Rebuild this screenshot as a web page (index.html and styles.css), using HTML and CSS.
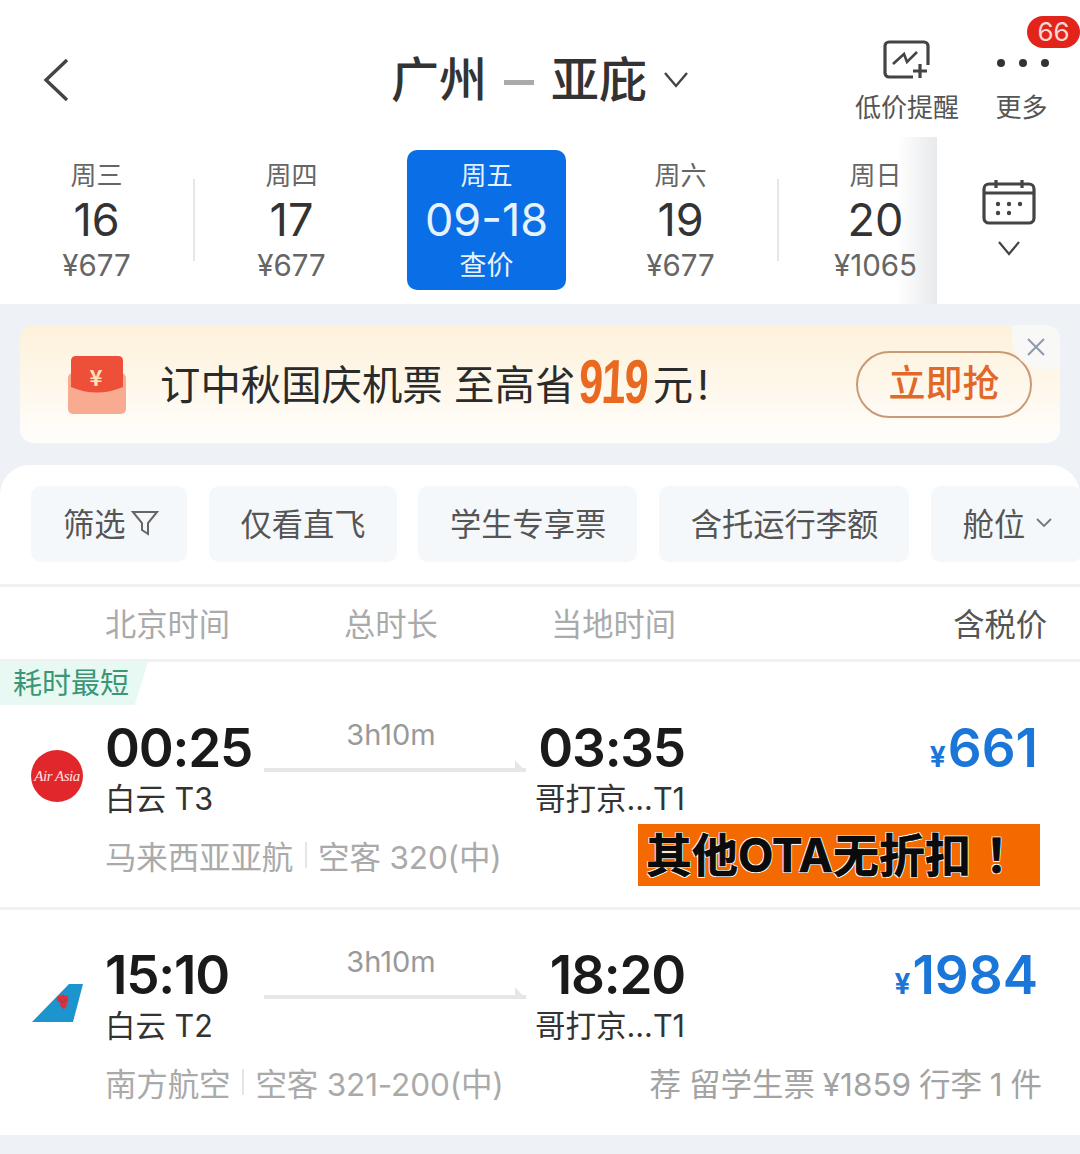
FILE: index.html
```html
<!DOCTYPE html>
<html lang="zh-CN">
<head>
    <meta charset="UTF-8">
    <meta name="viewport" content="width=device-width, initial-scale=1.0">
    <title>广州 - 亚庇</title>
    <link rel="stylesheet" href="styles.css">
</head>
<body>
    <header class="top-bar">
        <div class="back">
            <svg width="28" height="44" viewBox="0 0 28 44" fill="none" stroke="#444" stroke-width="3.4"><path d="M25 2 4 22l21 20"/></svg>
        </div>
        <div class="route-title">
            <span>广州</span>
            <i class="route-dash"></i>
            <span>亚庇</span>
            <svg class="title-caret" width="26" height="18" viewBox="0 0 26 18" fill="none" stroke="#444" stroke-width="2.4"><path d="M2 2l11 13L24 2"/></svg>
        </div>
        <div class="top-actions">
            <div class="action">
                <svg width="48" height="42" viewBox="0 0 48 42" fill="none" stroke="#444" stroke-width="3.2"><path d="M30 37H6a4 4 0 0 1-4-4V6a4 4 0 0 1 4-4h35a4 4 0 0 1 4 4v19"/><path d="M10 24l11-10 3 8 10-10" stroke-width="2.6"/><path d="M37 24v14M30 31h14" stroke-width="3.2"/></svg>
                <span>低价提醒</span>
            </div>
            <div class="action more">
                <b class="badge">66</b>
                <div class="dots"><i></i><i></i><i></i></div>
                <span>更多</span>
            </div>
        </div>
    </header>

    <section class="date-strip">
        <div class="dates">
            <div class="date"><span class="week">周三</span><span class="day">16</span><span class="fare">¥677</span></div>
            <i class="date-sep"></i>
            <div class="date"><span class="week">周四</span><span class="day">17</span><span class="fare">¥677</span></div>
            <div class="date active"><span class="week">周五</span><span class="day">09-18</span><span class="fare">查价</span></div>
            <div class="date"><span class="week">周六</span><span class="day">19</span><span class="fare">¥677</span></div>
            <i class="date-sep"></i>
            <div class="date"><span class="week">周日</span><span class="day">20</span><span class="fare">¥1065</span></div>
        </div>
        <div class="calendar">
            <svg width="54" height="46" viewBox="0 0 54 46" fill="none" stroke="#444" stroke-width="3.2"><rect x="2" y="5" width="50" height="39" rx="5"/><path d="M2 14h50M14 1v8M40 1v8"/><g fill="#444" stroke="none"><circle cx="16" cy="25" r="2.2"/><circle cx="27" cy="25" r="2.2"/><circle cx="38" cy="25" r="2.2"/><circle cx="16" cy="34" r="2.2"/><circle cx="27" cy="34" r="2.2"/></g></svg>
            <svg width="24" height="16" viewBox="0 0 24 16" fill="none" stroke="#444" stroke-width="2.2"><path d="M2 2l10 12L22 2"/></svg>
        </div>
    </section>

    <section class="promo">
        <svg class="envelope" width="60" height="62" viewBox="0 0 60 62">
            <rect x="1" y="20" width="58" height="41" rx="5" fill="#f9ab91"/>
            <path d="M4 8q0-5 5-5h42q5 0 5 5v26q-26 11-52 0z" fill="#ee4f38"/>
            <text x="29" y="33" text-anchor="middle" font-size="22" font-weight="700" fill="#fde2b8" font-family="Noto Sans CJK SC">¥</text>
        </svg>
        <p class="promo-text">订中秋国庆机票 至高省<b>919</b>元<span class="promo-bang">!</span></p>
        <div class="promo-btn">立即抢</div>
        <div class="promo-close">
            <svg width="20" height="20" viewBox="0 0 20 20" fill="none" stroke="#8d99ae" stroke-width="2"><path d="M2 2l16 16M18 2 2 18"/></svg>
        </div>
    </section>

    <main class="results">
        <div class="filters">
            <div class="chip chip-first">筛选
                <svg width="28" height="26" viewBox="0 0 28 26" fill="none" stroke="#666" stroke-width="2"><path d="M2 2h24l-9 11v11l-6-4v-7z"/></svg>
            </div>
            <div class="chip">仅看直飞</div>
            <div class="chip">学生专享票</div>
            <div class="chip">含托运行李额</div>
            <div class="chip chip-last">舱位
                <svg width="16" height="10" viewBox="0 0 16 10" fill="none" stroke="#777" stroke-width="1.8"><path d="M1 1l7 7 7-7"/></svg>
            </div>
        </div>

        <div class="list-head">
            <span>北京时间</span>
            <span>总时长</span>
            <span>当地时间</span>
            <span class="tax">含税价</span>
        </div>

        <article class="flight first">
            <div class="flag">耗时最短</div>
            <div class="flight-main">
                <div class="logo air-asia"><span>Air Asia</span></div>
                <div class="stop">
                    <div class="clock">00:25</div>
                    <div class="port">白云 T3</div>
                </div>
                <div class="leg">
                    <span>3h10m</span>
                    <i class="leg-arrow"></i>
                </div>
                <div class="stop arrive">
                    <div class="clock">03:35</div>
                    <div class="port">哥打京...T1</div>
                </div>
                <div class="price"><small>¥</small>661</div>
            </div>
            <div class="flight-sub">
                <div class="plane">马来西亚亚航<i></i>空客 320(中)</div>
                <div class="ota-note">其他OTA无折扣<span class="ota-bang">！</span></div>
            </div>
        </article>

        <article class="flight">
            <div class="flight-main">
                <div class="logo">
                    <svg width="52" height="40" viewBox="0 0 52 40"><path d="M38 1h14l-10 38H1z" fill="#1c94cd"/><path d="M26 15c1-3 3-3 4-2 1-2 3-2 4 0 2-1 4 0 3 2 1 2 0 4-1 5 0 3-1 5-3 6-3-1-4-3-4-6-2-1-4-3-3-5z" fill="#d7333f"/><path d="M29 16l2 3 2 0 2-3" fill="none" stroke="#8d3a66" stroke-width="1"/></svg>
                </div>
                <div class="stop">
                    <div class="clock">15:10</div>
                    <div class="port">白云 T2</div>
                </div>
                <div class="leg">
                    <span>3h10m</span>
                    <i class="leg-arrow"></i>
                </div>
                <div class="stop arrive">
                    <div class="clock">18:20</div>
                    <div class="port">哥打京...T1</div>
                </div>
                <div class="price"><small>¥</small>1984</div>
            </div>
            <div class="flight-sub">
                <div class="plane">南方航空<i></i>空客 321-200(中)</div>
                <div class="perk">荐 留学生票 ¥1859 行李 1 件</div>
            </div>
        </article>
    </main>
</body>
</html>
```

FILE: styles.css
```css
* {
    box-sizing: border-box;
}

body {
    margin: 0;
    width: 1080px;
    height: 1154px;
    overflow: hidden;
    background-color: #eef1f6;
    font-family: Inter, "Noto Sans CJK SC", sans-serif;
    color: #444;
}

i {
    font-style: normal;
}

/* top bar */
.top-bar {
    display: grid;
    grid-template-columns: 1fr auto 1fr;
    height: 137px;
    background-color: #fff;
}

.back {
    padding: 58px 0 0 42px;
}

.route-title {
    display: flex;
    align-items: center;
    height: 60px;
    margin-top: 50px;
    font-size: 48px;
    font-weight: 500;
    line-height: 60px;
    color: #333;
}

.route-dash {
    width: 30px;
    height: 5px;
    margin: 4px 17px 0;
    background-color: #aaa;
}

.title-caret {
    margin-left: 16px;
}

.top-actions {
    display: flex;
    justify-content: flex-end;
    gap: 35px;
    padding: 40px 31px 0 0;
}

.action {
    position: relative;
    display: flex;
    flex-direction: column;
    align-items: center;
    font-size: 26px;
    line-height: 30px;
    color: #555;
}

.action svg {
    height: 42px;
    margin-bottom: 11px;
}

.dots {
    display: flex;
    gap: 14px;
    height: 42px;
    margin: 0 0 11px 3px;
    padding-top: 19px;
}

.dots i {
    width: 8px;
    height: 8px;
    border-radius: 50%;
    background-color: #333;
}

.badge {
    position: absolute;
    top: -24px;
    right: -31px;
    width: 53px;
    height: 32px;
    border-radius: 16px;
    background-color: #e3241b;
    color: #f9d9d2;
    font-size: 26px;
    font-weight: 400;
    line-height: 32px;
    text-align: center;
}

/* date strip */
.date-strip {
    display: flex;
    height: 167px;
    background-color: #fff;
}

.dates {
    flex: 0 0 937px;
    display: flex;
    align-items: center;
    padding-bottom: 2px;
    overflow: hidden;
    background: linear-gradient(to right, rgba(228, 230, 232, 0), #e7e9eb) right / 40px 100% no-repeat;
}

.date {
    flex: 0 0 193px;
    display: flex;
    flex-direction: column;
    align-items: center;
    justify-content: center;
    height: 140px;
    padding-top: 3px;
}

.date-sep {
    flex: 0 0 2px;
    height: 82px;
    background-color: #e6e6e6;
}

.week {
    font-size: 26px;
    line-height: 30px;
    color: #666;
}

.day {
    font-size: 45px;
    line-height: 58px;
    color: #333;
}

.fare {
    font-size: 29.5px;
    line-height: 33px;
    color: #666;
}

.date.active {
    flex: 0 0 159px;
    margin: 0 18px 0 19px;
    border-radius: 10px;
    background-color: #0a6ee6;
}

.date.active span {
    color: #e6f3ff;
}

.date.active .fare {
    font-size: 27px;
}

.calendar {
    flex: 1;
    display: flex;
    flex-direction: column;
    align-items: center;
    gap: 15px;
    padding-top: 42px;
}

/* promo banner */
.promo {
    position: relative;
    display: flex;
    align-items: center;
    height: 118px;
    margin: 21px 20px 0;
    padding: 0 28px 0 47px;
    border-radius: 14px;
    background: linear-gradient(to bottom, #fdf1da 0%, #fef7ea 50%, #fffdfa 90%);
}

.envelope {
    flex: none;
}

.promo-text {
    flex: 1;
    margin: 0 0 0 33px;
    font-size: 40.4px;
    line-height: 60px;
    color: #2b2b2b;
    white-space: nowrap;
}

.promo-text b {
    display: inline-block;
    margin: 0 -24px 0 4px;
    font-family: "Liberation Sans", sans-serif;
    font-size: 62px;
    line-height: 60px;
    letter-spacing: -2px;
    color: #e8691f;
    vertical-align: -3px;
    transform: scaleX(0.7) skewX(-4deg);
    transform-origin: left center;
}

.promo-bang {
    margin-left: 4px;
}

.promo-btn {
    flex: 0 0 176px;
    height: 67px;
    border: 2px solid #c99a77;
    border-radius: 34px;
    color: #e2682a;
    font-size: 37px;
    font-weight: 500;
    line-height: 62px;
    text-align: center;
}

.promo-close {
    position: absolute;
    top: 0;
    right: 0;
    display: flex;
    align-items: center;
    justify-content: center;
    width: 48px;
    height: 44px;
    border-radius: 0 14px 0 30px;
    background-color: #f8f8f6;
}

/* results card */
.results {
    margin-top: 22px;
    height: 670px;
    border-radius: 30px 30px 0 0;
    background-color: #fff;
}

.filters {
    display: flex;
    gap: 21.5px;
    height: 122px;
    padding: 21px 0 0 31px;
    border-bottom: 3px solid #f1f1f1;
    overflow: hidden;
}

.chip {
    flex: none;
    display: flex;
    align-items: center;
    gap: 6px;
    height: 76px;
    padding: 0 31px 3px 32px;
    border-radius: 10px;
    background-color: #f5f8fa;
    font-size: 31.25px;
    color: #555;
}

.chip-first {
    gap: 5px;
    padding-right: 28.5px;
}

.chip-last {
    gap: 11px;
    padding-right: 30px;
}

.list-head {
    display: grid;
    grid-template-columns: 239px 207px 1fr auto;
    align-items: center;
    height: 75px;
    padding: 0 33px 2px 105px;
    border-bottom: 3px solid #f1f1f1;
    font-size: 31.25px;
    color: #aaa;
}

.tax {
    color: #555;
}

/* flight rows */
.flight {
    height: 248px;
    padding-top: 40px;
    border-bottom: 3px solid #f1f1f1;
}

.flight.first {
    padding-top: 0;
}

.flight:last-child {
    height: 224px;
    border-bottom: 0;
}

.flag {
    display: flex;
    align-items: center;
    width: 148px;
    height: 43px;
    margin-bottom: 18px;
    padding: 0 0 5px 13px;
    background-color: #e8f8f2;
    clip-path: polygon(0 0, 100% 0, 91% 100%, 0 100%);
    font-size: 29px;
    color: #3a9675;
}

.flight-main {
    display: grid;
    grid-template-columns: 106px 158px 262px 159px 1fr;
    padding-right: 42px;
}

.logo {
    display: flex;
    align-items: center;
    justify-content: center;
    width: 52px;
    height: 52px;
    margin: 27px 0 0 31px;
}

.air-asia {
    border-radius: 50%;
    background-color: #e1262c;
}

.air-asia span {
    font-family: "Liberation Serif", serif;
    font-size: 15px;
    font-style: italic;
    color: #fbe4e0;
    white-space: nowrap;
    letter-spacing: -0.5px;
}

.clock {
    margin-left: -1px;
    font-size: 53px;
    font-weight: 600;
    line-height: 50px;
    letter-spacing: -1.2px;
    color: #1a1a1a;
}

.port {
    margin: 7px 0 0 -1px;
    font-size: 30.5px;
    line-height: 38px;
    color: #333;
}

.arrive {
    text-align: right;
}

.leg {
    display: flex;
    flex-direction: column;
    align-items: center;
    margin-top: -5px;
    padding-right: 8px;
}

.leg span {
    font-size: 29px;
    line-height: 34px;
    color: #999;
}

.leg-arrow {
    position: relative;
    align-self: stretch;
    height: 4px;
    margin: 16px -8px 0 0;
    background-color: #e6e6e6;
}

.leg-arrow::after {
    content: "";
    position: absolute;
    right: 0;
    bottom: 0;
    border-left: 11px solid #e6e6e6;
    border-top: 12px solid transparent;
}

.price {
    font-size: 53px;
    font-weight: 600;
    line-height: 50px;
    text-align: right;
    color: #1a76d8;
}

.price small {
    margin-right: 2px;
    font-size: 28px;
    font-weight: 700;
}

.flight-sub {
    display: flex;
    align-items: center;
    justify-content: space-between;
    height: 40px;
    margin-top: 17px;
    padding: 0 40px 0 105px;
}

.plane {
    display: flex;
    align-items: center;
    font-size: 31.5px;
    letter-spacing: -0.15px;
    color: #aaa;
    white-space: nowrap;
}

.plane i {
    width: 2px;
    height: 26px;
    margin: 0 11px 0 12px;
    background-color: #e5e5e5;
}

.ota-note {
    flex: 0 0 402px;
    height: 62px;
    margin-top: 0;
    padding: 1px 0 0 8px;
    background-color: #f56a00;
    font-size: 46px;
    font-weight: 700;
    line-height: 60px;
    color: #0b0b0b;
    white-space: nowrap;
    -webkit-text-stroke: 0.6px #000;
    text-shadow: -1px -1px 0 #fff, 1px -1px 0 #fff, -1px 1px 0 #fff, 1px 1px 0 #fff;
}

.ota-bang {
    margin-left: 14px;
}

.perk {
    margin-right: -2px;
    font-size: 31.5px;
    word-spacing: -1px;
    color: #a3a3a3;
    white-space: nowrap;
}
```
